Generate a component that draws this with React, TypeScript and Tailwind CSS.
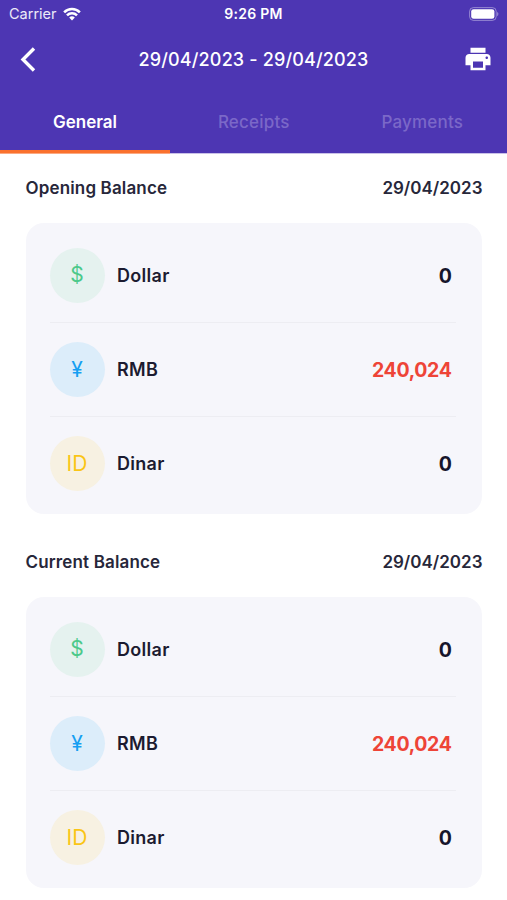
import { MdPrint } from "react-icons/md";

type Currency = {
  name: string;
  symbol: string;
  amount: number;
  iconClass: string;
};

type BalanceProps = {
  title: string;
  date: string;
  items: Currency[];
  className?: string;
};

const tabs = ["General", "Receipts", "Payments"];

const currencies: Currency[] = [
  { name: "Dollar", symbol: "$", amount: 0, iconClass: "bg-[#e5f2ef] text-[#4cc98a]" },
  { name: "RMB", symbol: "¥", amount: 240024, iconClass: "bg-[#dcedfa] text-[#169ff2]" },
  { name: "Dinar", symbol: "ID", amount: 0, iconClass: "bg-[#f7f1e2] text-[#fac516]" },
];

const StatusBar = () => (
  <div className="grid h-[27px] grid-cols-3 items-center px-2 text-white">
    <div className="flex items-center gap-[6px] pl-px">
      <span className="text-[14.5px] text-white/90">Carrier</span>
      <svg width="18" height="14" viewBox="0 0 19 14" fill="none" stroke="currentColor" strokeWidth="2.7">
        <path d="M1.2 5.2a11.8 11.8 0 0 1 16.6 0" />
        <path d="M4.2 8.5a7.5 7.5 0 0 1 10.6 0" />
        <path d="M9.5 13.8L6.5 10.8a4.3 4.3 0 0 1 6 0z" fill="currentColor" stroke="none" />
      </svg>
    </div>
    <span className="text-center text-[14px] font-semibold tracking-[0.25px]">9:26 PM</span>
    <svg className="justify-self-end" width="30" height="14" viewBox="0 0 30 14">
      <rect x="0.6" y="0.6" width="26.6" height="12.8" rx="3.8" fill="none" stroke="#fff" strokeOpacity="0.4" />
      <rect x="2.2" y="2.2" width="23.2" height="9.6" rx="2.4" fill="#fff" />
      <path d="M28.2 5v4.2c1.6-.6 1.6-3.6 0-4.2z" fill="#fff" fillOpacity="0.45" />
    </svg>
  </div>
);

const Balance = ({ title, date, items, className = "" }: BalanceProps) => (
  <section className={className}>
    <div className="flex h-6 items-center justify-between text-[17px] font-semibold text-[#27273a]">
      <h2 className="tracking-[0.15px]">{title}</h2>
      <span className="-mr-px">{date}</span>
    </div>
    <div className="mt-[22px] rounded-[18px] bg-[#f6f6fb] pt-[5px] pr-[26px] pb-1 pl-6">
      {items.map((item, i) => (
        <div
          key={item.name}
          className={`flex h-[94px] items-center pr-1 ${i > 0 ? "border-t border-[#ededf2]" : ""}`}
        >
          <div className={`flex size-[55px] items-center justify-center rounded-full text-[21px] ${item.iconClass}`}>
            {item.symbol}
          </div>
          <span className="ml-[12.5px] text-[18px] font-semibold tracking-[0.3px] text-[#1c1b30]">{item.name}</span>
          <span
            className={`ml-auto pt-[3px] text-[19.5px] font-bold tracking-[-0.35px] ${
              item.amount > 0 ? "text-[#ee4437]" : "text-[#16152b]"
            }`}
          >
            {item.amount.toLocaleString("en-US")}
          </span>
        </div>
      ))}
    </div>
  </section>
);

export default function App() {
  return (
    <div className="min-h-[900px] bg-white font-['Inter',sans-serif]">
      <header className="h-[154px] bg-[#4d36b3] text-white">
        <StatusBar />
        <div className="flex h-16 items-center justify-between pr-[14px] pl-5">
          <button aria-label="Back" className="w-6">
            <svg width="16" height="25" viewBox="0 0 16 25" fill="none" stroke="currentColor" strokeWidth="3.4">
              <path d="M14 1.5L3 12.5l11 11" />
            </svg>
          </button>
          <h1 className="text-[18px] font-medium tracking-[0.15px]">29/04/2023 - 29/04/2023</h1>
          <button aria-label="Print">
            <MdPrint size={30} />
          </button>
        </div>
        <nav className="grid h-[62px] grid-cols-[170px_1fr_1fr]">
          {tabs.map((tab, i) => (
            <button
              key={tab}
              className={`border-b-[3px] pt-1 text-[17px] ${
                i === 0
                  ? "border-[#fa712d] font-semibold text-white"
                  : "border-transparent pr-px font-medium tracking-[0.2px] text-[#7b68c8]"
              }`}
            >
              {tab}
            </button>
          ))}
        </nav>
        <div className="h-px bg-[#c9c1e8]">
          <div className="h-px w-[170px] bg-[#fba982]" />
        </div>
      </header>
      <main className="px-[25.5px]">
        <Balance title="Opening Balance" date="29/04/2023" items={currencies} className="pt-[23px]" />
        <Balance title="Current Balance" date="29/04/2023" items={currencies} className="pt-[37px]" />
      </main>
    </div>
  );
}
